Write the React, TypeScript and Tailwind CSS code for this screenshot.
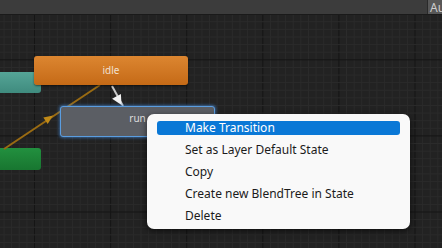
import React from "react";

function Grid() {
  const w = 442;
  const h = 233;
  const minor = 7.61;
  const x0 = 34.5;
  const y0 = 212 - 15;
  const vs: React.ReactNode[] = [];
  for (let k = -10; k < 60; k++) {
    const x = x0 + k * minor;
    if (x < 0 || x > w) continue;
    const major = ((k % 10) + 10) % 10 === 0;
    vs.push(
      <line key={"v" + k} x1={x} y1={0} x2={x} y2={h} stroke={major ? "#151515" : "#2b2b2b"} strokeWidth={1} />
    );
  }
  for (let k = -40; k < 20; k++) {
    const y = y0 + k * minor;
    if (y < 0 || y > h) continue;
    const major = ((k % 10) + 10) % 10 === 0;
    vs.push(
      <line key={"h" + k} x1={0} y1={y} x2={w} y2={y} stroke={major ? "#151515" : "#2b2b2b"} strokeWidth={1} />
    );
  }
  return (
    <svg className="absolute inset-0" width={w} height={h} viewBox={`0 0 ${w} ${h}`}>
      <rect width={w} height={h} fill="#222222" />
      {vs}
    </svg>
  );
}

function Connections() {
  return (
    <svg className="absolute inset-0" width={442} height={233} viewBox="0 0 442 233">
      {/* orange transition from green to idle */}
      <line x1={4} y1={134} x2={100} y2={70} stroke="#9a6b12" strokeWidth={2} />
      <polygon points="53,100.5 47.7,109 43.3,102.4" fill="#c08a18" />
      {/* white transition idle -> run */}
      <line x1={112} y1={71} x2={123} y2={91} stroke="#c8c8c8" strokeWidth={2} />
      <polygon points="121.5,90 120.9,79 112.1,83.8" fill="#f2f2f2" />
    </svg>
  );
}

const items = [
  "Make Transition",
  "Set as Layer Default State",
  "Copy",
  "Create new BlendTree in State",
  "Delete",
];

export default function App() {
  return (
    <div className="relative w-[442px] h-[248px] overflow-hidden bg-[#222222]" style={{ fontFamily: '"Noto Sans", sans-serif' }}>
      <div className="flex h-[15px] bg-[#3c3c3c] border-b border-[#1a1a1a]">
        <div className="flex-1" />
        <div className="w-[15px] bg-[#585858] border-l border-[#2a2a2a] text-[#cfcfcf] text-[12px] leading-[15px] pl-[2px] overflow-hidden whitespace-nowrap">
          Au
        </div>
      </div>
      <div className="relative w-[442px] h-[233px]">
        <Grid />
        {/* teal node */}
        <div className="absolute left-[-20px] top-[57px] w-[61px] h-[21px] rounded-[3px] bg-gradient-to-b from-[#55a597] to-[#3f8b7e]" />
        {/* green node */}
        <div className="absolute left-[-20px] top-[133px] w-[61px] h-[22px] rounded-[3px] bg-gradient-to-b from-[#22903f] to-[#187630]" />
        <Connections />
        {/* idle */}
        <div className="absolute left-[34px] top-[41px] w-[154px] h-[29px] rounded-[3px] bg-gradient-to-b from-[#dc8630] to-[#c56a16] flex items-center justify-center text-[10px] text-[#f0e0d0] shadow-[0_1px_2px_rgba(0,0,0,0.5)]">
          idle
        </div>
        {/* run */}
        <div className="absolute left-[60px] top-[91px] w-[155px] h-[31px] rounded-[3px] bg-[#5b5e64] border border-[#5a9de0] shadow-[0_0_3px_1px_rgba(70,140,220,0.6)] flex items-center justify-center text-[10px] text-[#dcdcdc] pb-[6px]">
          run
        </div>
        {/* context menu */}
        <div className="absolute left-[147px] top-[99px] w-[263px] h-[115px] rounded-[7px] bg-[#f9f9f9] shadow-[0_2px_6px_rgba(0,0,0,0.6)] px-[10px] pt-[7px] flex flex-col">
          {items.map((t, i) => (
            <div
              key={t}
              className={
                i === 0
                  ? "h-[14px] mb-[4px] rounded-[3px] bg-[#0a78d6] text-white text-[12px] leading-[14px] pl-[28px] whitespace-nowrap"
                  : "h-[22px] text-[#1b1b1b] text-[12px] leading-[22px] pl-[28px] whitespace-nowrap"
              }
            >
              {t}
            </div>
          ))}
        </div>
      </div>
    </div>
  );
}
